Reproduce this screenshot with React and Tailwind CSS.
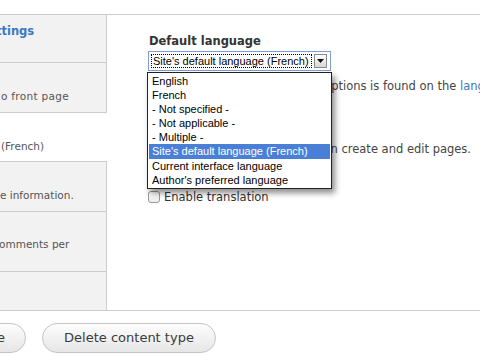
import React from "react";

const items = [
  "English",
  "French",
  "- Not specified -",
  "- Not applicable -",
  "- Multiple -",
  "Site's default language (French)",
  "Current interface language",
  "Author's preferred language",
];

function Tab({ h, pt, selected, last, children }) {
  return (
    <div
      className={
        "w-[107px] overflow-hidden " +
        (selected ? "bg-white " : "bg-[#f2f2f2] border-r border-[#cccccc] ") +
        (last ? "" : "border-b border-[#cccccc]")
      }
      style={{ height: h, paddingTop: pt }}
    >
      {children}
    </div>
  );
}

export default function App() {
  return (
    <div
      className="relative w-[480px] h-[356px] overflow-hidden bg-white whitespace-nowrap"
      style={{ fontFamily: '"DejaVu Sans", Verdana, sans-serif' }}
    >
      <div className="h-[14px]" />
      <div className="flex h-[297px] border-t border-b border-[#cccccc]">
        <div className="flex flex-col w-[107px] shrink-0">
          <Tab h={48} pt={8}>
            <div className="text-[11.5px] leading-[16px] font-bold text-[#3a78c3] -ml-[4px]">ttings</div>
          </Tab>
          <Tab h={50} pt={26}>
            <div className="text-[10.5px] leading-[14px] text-[#555555] ml-[1px] tracking-[0.3px]">o front page</div>
          </Tab>
          <Tab h={49} pt={26} selected>
            <div className="text-[10.5px] leading-[14px] text-[#555555] ml-[1px]">(French)</div>
          </Tab>
          <Tab h={50} pt={26}>
            <div className="text-[10.5px] leading-[14px] text-[#555555]">e information.</div>
          </Tab>
          <Tab h={60} pt={25}>
            <div className="text-[10.5px] leading-[14px] text-[#555555] -ml-[1px]">omments per</div>
          </Tab>
          <div className="flex-1 bg-[#f2f2f2] border-r border-[#cccccc]" />
        </div>
        <div className="flex-1 pl-[41px] pt-[18px] text-[#444444]">
          <div className="text-[11.5px] leading-[16px] font-bold text-[#333333] pl-[1px]">Default language</div>
          <div className="mt-[2px] flex items-center w-[183px] h-[20px] border border-[#7f9fd4] bg-white">
            <span
              className="ml-[2px] h-[14px] w-[161px] border border-dotted border-black text-[11px] leading-[12px] text-black pl-[1px]"
              style={{ fontFamily: '"Liberation Sans", Arial, sans-serif' }}
            >
              Site's default language (French)
            </span>
            <span className="ml-[2px] w-[13px] h-[14px] border border-[#8a8a8a] bg-gradient-to-b from-[#ffffff] to-[#d6d6d6] flex items-center justify-center">
              <svg width="7" height="4" viewBox="0 0 7 4">
                <path d="M0 0 L7 0 L3.5 4 Z" fill="#111" />
              </svg>
            </span>
          </div>
          <p className="mt-[7px] pl-[10px] text-[11.5px] leading-[16px]">
            Explanation of the language options is found on the{" "}
            <span className="text-[#3a78c3]">languages list page</span>.
          </p>
          <div className="mt-[47px] ml-[18px] flex items-center gap-[4px] text-[11.5px] leading-[16px]">
            <span className="w-[12px] h-[12px] rounded-[3px] border border-[#999999] bg-white" />
            <span>Show language selector on create and edit pages.</span>
          </div>
          <div className="mt-[32px] flex items-center gap-[4px] text-[11.5px] leading-[16px] text-[#333333]">
            <span className="w-[12px] h-[12px] rounded-[3px] border border-[#999999] bg-gradient-to-b from-[#ffffff] to-[#ececec]" />
            <span>Enable translation</span>
          </div>
        </div>
      </div>
      <div className="flex items-center gap-[16px] pt-[12px]">
        <button className="-ml-[135px] h-[30px] px-[20px] rounded-full border border-[#c4c4c4] bg-gradient-to-b from-[#fdfdfd] to-[#e6e6e6] text-[13px] text-[#3b3b3b]">
          Save content type
        </button>
        <button className="h-[30px] w-[174px] rounded-full border border-[#c4c4c4] bg-gradient-to-b from-[#fdfdfd] to-[#e6e6e6] text-[13px] text-[#3b3b3b]">
          Delete content type
        </button>
      </div>

      <div
        className="absolute left-[147px] top-[72px] w-[185px] border border-[#222222] bg-white py-[1px] shadow-[3px_4px_6px_rgba(0,0,0,0.45)]"
        style={{ fontFamily: '"Liberation Sans", Arial, sans-serif' }}
      >
        {items.map((it, i) => (
          <div
            key={i}
            className={
              "mx-[1px] h-[14.1px] leading-[14px] pl-[3px] text-[11px] " +
              (i === 5 ? "bg-[#4a7fd7] text-white" : "text-black")
            }
          >
            {it}
          </div>
        ))}
      </div>
    </div>
  );
}
